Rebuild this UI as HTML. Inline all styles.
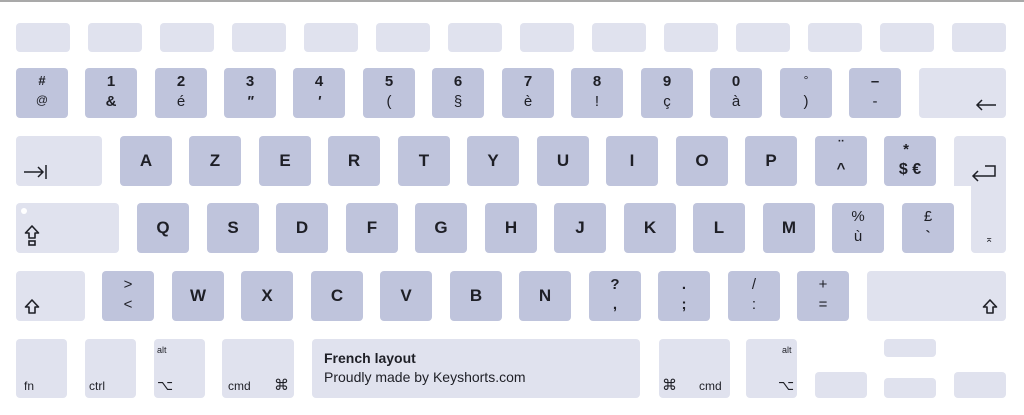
<!DOCTYPE html>
<html><head><meta charset="utf-8"><style>
body{margin:0;width:1024px;height:415px;background:#fff;position:relative;overflow:hidden;font-family:"Liberation Sans","DejaVu Sans",sans-serif;color:#1e1f26}
.top{position:absolute;left:0;top:0;width:1024px;height:2px;background:#a9a9a9}
.k{position:absolute;width:52px;height:50px;background:#bfc4dc;border-radius:4px}
.l{background:#e0e2ee}
.c{position:absolute;left:0;right:0;text-align:center;font-weight:bold;font-size:17px;top:15px}
.t{position:absolute;left:0;right:0;text-align:center;font-size:15px;top:5px;font-weight:bold}
.b{position:absolute;left:0;right:0;text-align:center;font-size:15px;top:25px}
.s{position:absolute;font-size:13px}
.tiny{position:absolute;font-size:9px}
svg{position:absolute}
</style></head><body>
<div class="top"></div>
<!-- row 0 -->
<div class="k l" style="left:16px;top:23px;width:54px;height:29px"></div>
<div class="k l" style="left:88px;top:23px;width:54px;height:29px"></div>
<div class="k l" style="left:160px;top:23px;width:54px;height:29px"></div>
<div class="k l" style="left:232px;top:23px;width:54px;height:29px"></div>
<div class="k l" style="left:304px;top:23px;width:54px;height:29px"></div>
<div class="k l" style="left:376px;top:23px;width:54px;height:29px"></div>
<div class="k l" style="left:448px;top:23px;width:54px;height:29px"></div>
<div class="k l" style="left:520px;top:23px;width:54px;height:29px"></div>
<div class="k l" style="left:592px;top:23px;width:54px;height:29px"></div>
<div class="k l" style="left:664px;top:23px;width:54px;height:29px"></div>
<div class="k l" style="left:736px;top:23px;width:54px;height:29px"></div>
<div class="k l" style="left:808px;top:23px;width:54px;height:29px"></div>
<div class="k l" style="left:880px;top:23px;width:54px;height:29px"></div>
<div class="k l" style="left:952px;top:23px;width:54px;height:29px"></div>
<!-- row 1 -->
<div class="k" style="left:16px;top:68px"><div class="t" style="font-size:13px">#</div><div class="b" style="font-size:12px">@</div></div>
<div class="k" style="left:85px;top:68px"><div class="t">1</div><div class="b" style="font-weight:bold">&amp;</div></div>
<div class="k" style="left:155px;top:68px"><div class="t">2</div><div class="b">é</div></div>
<div class="k" style="left:224px;top:68px"><div class="t">3</div><div class="b" style="font-weight:bold;font-style:italic">"</div></div>
<div class="k" style="left:293px;top:68px"><div class="t">4</div><div class="b" style="font-weight:bold;font-style:italic">'</div></div>
<div class="k" style="left:363px;top:68px"><div class="t">5</div><div class="b">(</div></div>
<div class="k" style="left:432px;top:68px"><div class="t">6</div><div class="b">§</div></div>
<div class="k" style="left:502px;top:68px"><div class="t">7</div><div class="b">è</div></div>
<div class="k" style="left:571px;top:68px"><div class="t">8</div><div class="b">!</div></div>
<div class="k" style="left:641px;top:68px"><div class="t">9</div><div class="b">ç</div></div>
<div class="k" style="left:710px;top:68px"><div class="t">0</div><div class="b">à</div></div>
<div class="k" style="left:780px;top:68px"><div class="t" style="font-weight:normal;font-size:12px">°</div><div class="b">)</div></div>
<div class="k" style="left:849px;top:68px"><div class="t">–</div><div class="b">-</div></div>
<div class="k l" style="left:919px;top:68px;width:87px"><svg style="left:56px;top:31px" width="22" height="12" viewBox="0 0 22 12"><path d="M21 6H2M7 1L2 6l5 5" fill="none" stroke="#1e1f26" stroke-width="1.5"/></svg></div>
<!-- row 2 -->
<div class="k l" style="left:16px;top:136px;width:86px"><svg style="left:8px;top:29px" width="24" height="14" viewBox="0 0 24 14"><path d="M0 7H19M14 2l5 5-5 5M22 0v14" fill="none" stroke="#1e1f26" stroke-width="1.5"/></svg></div>
<div class="k" style="left:120px;top:136px"><div class="c">A</div></div>
<div class="k" style="left:189px;top:136px"><div class="c">Z</div></div>
<div class="k" style="left:259px;top:136px"><div class="c">E</div></div>
<div class="k" style="left:328px;top:136px"><div class="c">R</div></div>
<div class="k" style="left:398px;top:136px"><div class="c">T</div></div>
<div class="k" style="left:467px;top:136px"><div class="c">Y</div></div>
<div class="k" style="left:537px;top:136px"><div class="c">U</div></div>
<div class="k" style="left:606px;top:136px"><div class="c">I</div></div>
<div class="k" style="left:676px;top:136px"><div class="c">O</div></div>
<div class="k" style="left:745px;top:136px"><div class="c">P</div></div>
<div class="k" style="left:815px;top:136px"><div class="t" style="top:1px">¨</div><div class="b" style="font-weight:bold;top:24px">^</div></div>
<div class="k" style="left:884px;top:136px"><div class="t" style="left:-8px">*</div><div class="b" style="font-weight:bold;font-size:16px">$ €</div></div>
<div class="k l" style="left:954px;top:136px;height:50px;border-bottom-left-radius:0"></div>
<div class="k l" style="left:971px;top:180px;width:35px;height:73px;border-top-left-radius:0;border-top-right-radius:0"><div class="s" style="left:14px;top:54px;font-size:10px">⌅</div></div>
<svg style="left:971px;top:164px" width="26" height="18" viewBox="0 0 26 18"><path d="M14 2h10v10H2M7 7l-5 5 5 5" fill="none" stroke="#1e1f26" stroke-width="1.5"/></svg>
<!-- row 3 -->
<div class="k l" style="left:16px;top:203px;width:103px"><div style="position:absolute;left:5px;top:5px;width:6px;height:6px;border-radius:3px;background:#fff"></div><svg style="left:8px;top:22px" width="16" height="22" viewBox="0 0 16 22"><path d="M8 1L1.5 8H5v5h6V8h3.5z" fill="none" stroke="#1e1f26" stroke-width="1.6" stroke-linejoin="round"/><rect x="5" y="16" width="6" height="4" fill="none" stroke="#1e1f26" stroke-width="1.6"/></svg></div>
<div class="k" style="left:137px;top:203px"><div class="c">Q</div></div>
<div class="k" style="left:207px;top:203px"><div class="c">S</div></div>
<div class="k" style="left:276px;top:203px"><div class="c">D</div></div>
<div class="k" style="left:346px;top:203px"><div class="c">F</div></div>
<div class="k" style="left:415px;top:203px"><div class="c">G</div></div>
<div class="k" style="left:485px;top:203px"><div class="c">H</div></div>
<div class="k" style="left:554px;top:203px"><div class="c">J</div></div>
<div class="k" style="left:624px;top:203px"><div class="c">K</div></div>
<div class="k" style="left:693px;top:203px"><div class="c">L</div></div>
<div class="k" style="left:763px;top:203px"><div class="c">M</div></div>
<div class="k" style="left:832px;top:203px"><div class="t" style="font-weight:normal">%</div><div class="b">ù</div></div>
<div class="k" style="left:902px;top:203px"><div class="t" style="font-weight:normal">£</div><div class="b" style="font-weight:bold">`</div></div>
<!-- row 4 -->
<div class="k l" style="left:16px;top:271px;width:69px"><svg style="left:8px;top:28px" width="16" height="16" viewBox="0 0 16 16"><path d="M8 1L1.5 8H5v6h6V8h3.5z" fill="none" stroke="#1e1f26" stroke-width="1.6" stroke-linejoin="round"/></svg></div>
<div class="k" style="left:102px;top:271px"><div class="t" style="font-weight:normal">&gt;</div><div class="b">&lt;</div></div>
<div class="k" style="left:172px;top:271px"><div class="c">W</div></div>
<div class="k" style="left:241px;top:271px"><div class="c">X</div></div>
<div class="k" style="left:311px;top:271px"><div class="c">C</div></div>
<div class="k" style="left:380px;top:271px"><div class="c">V</div></div>
<div class="k" style="left:450px;top:271px"><div class="c">B</div></div>
<div class="k" style="left:519px;top:271px"><div class="c">N</div></div>
<div class="k" style="left:589px;top:271px"><div class="t">?</div><div class="b" style="font-weight:bold">,</div></div>
<div class="k" style="left:658px;top:271px"><div class="t">.</div><div class="b" style="font-weight:bold">;</div></div>
<div class="k" style="left:728px;top:271px"><div class="t" style="font-weight:normal">/</div><div class="b">:</div></div>
<div class="k" style="left:797px;top:271px"><div class="t" style="font-weight:normal">+</div><div class="b">=</div></div>
<div class="k l" style="left:867px;top:271px;width:139px"><svg style="left:115px;top:28px" width="16" height="16" viewBox="0 0 16 16"><path d="M8 1L1.5 8H5v6h6V8h3.5z" fill="none" stroke="#1e1f26" stroke-width="1.6" stroke-linejoin="round"/></svg></div>
<!-- row 5 -->
<div class="k l" style="left:16px;top:339px;width:51px;height:59px"><div class="s" style="left:8px;top:40px;font-size:12px">fn</div></div>
<div class="k l" style="left:85px;top:339px;width:51px;height:59px"><div class="s" style="left:4px;top:40px;font-size:12px">ctrl</div></div>
<div class="k l" style="left:154px;top:339px;width:51px;height:59px"><div class="tiny" style="left:3px;top:6px">alt</div><div class="s" style="left:3px;top:38px;font-size:14px">⌥</div></div>
<div class="k l" style="left:222px;top:339px;width:72px;height:59px"><div class="s" style="left:6px;top:40px;font-size:12px">cmd</div><div class="s" style="left:52px;top:37px;font-size:15px">⌘</div></div>
<div class="k l" style="left:312px;top:339px;width:328px;height:59px"><div class="s" style="left:12px;top:11px;font-weight:bold;font-size:14px">French layout</div><div class="s" style="left:12px;top:30px;font-size:14px">Proudly made by Keyshorts.com</div></div>
<div class="k l" style="left:659px;top:339px;width:71px;height:59px"><div class="s" style="left:3px;top:37px;font-size:15px">⌘</div><div class="s" style="left:40px;top:40px;font-size:12px">cmd</div></div>
<div class="k l" style="left:746px;top:339px;width:51px;height:59px"><div class="tiny" style="left:36px;top:6px">alt</div><div class="s" style="left:32px;top:38px;font-size:14px">⌥</div></div>
<div class="k l" style="left:884px;top:339px;width:52px;height:18px"></div>
<div class="k l" style="left:815px;top:372px;width:52px;height:26px"></div>
<div class="k l" style="left:884px;top:378px;width:52px;height:20px"></div>
<div class="k l" style="left:954px;top:372px;width:52px;height:26px"></div>
</body></html>
